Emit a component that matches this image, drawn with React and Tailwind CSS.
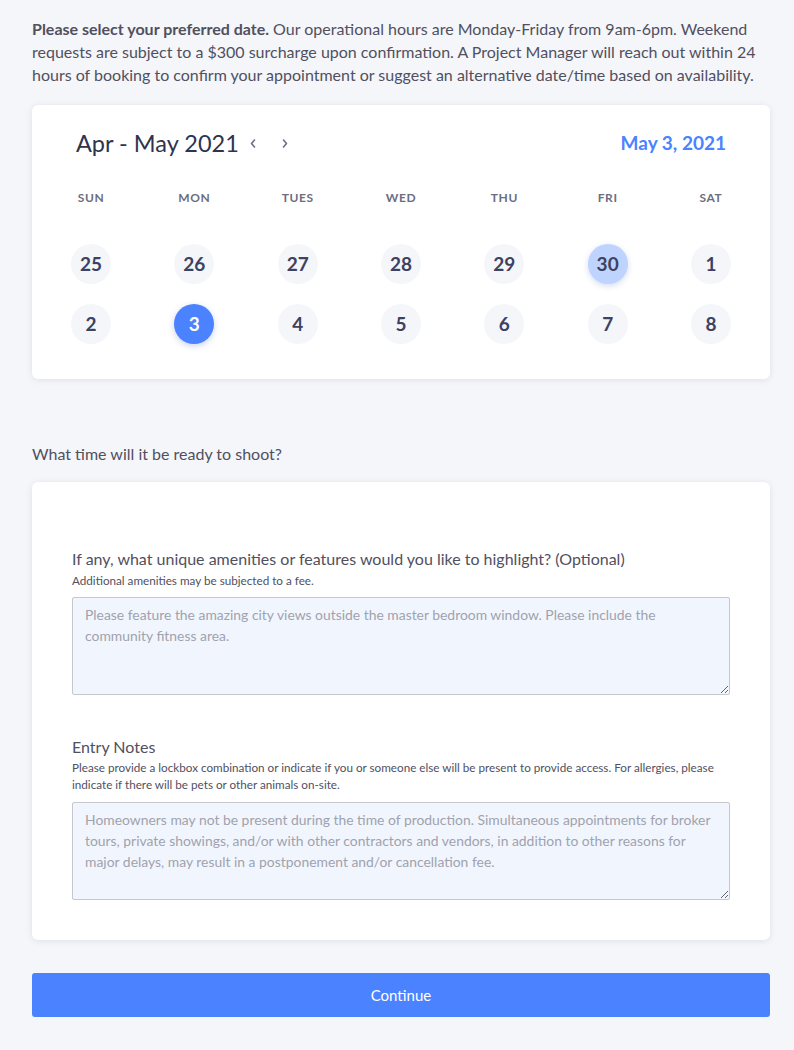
import React, { useState } from "react";

const weekdays = ["SUN", "MON", "TUES", "WED", "THU", "FRI", "SAT"];
const weeks = [
    [25, 26, 27, 28, 29, 30, 1],
    [2, 3, 4, 5, 6, 7, 8],
];

function Chevron({ dir }) {
    return (
        <svg width="6" height="9" viewBox="0 0 6 9" fill="none">
            <path
                d={dir === "left" ? "M4.5 1 L1.5 4.5 L4.5 8" : "M1.5 1 L4.5 4.5 L1.5 8"}
                stroke="#6b6e80"
                strokeWidth="1.6"
                strokeLinecap="round"
                strokeLinejoin="round"
            />
        </svg>
    );
}

function DayCircle({ day, week, selected }) {
    let cls = "bg-[#f5f6fa] text-[#3d4260]";
    if (selected === `${week}-${day}`) {
        cls = "bg-[#4a82ff] text-white shadow-[0_2px_6px_rgba(40,80,180,0.25)]";
    } else if (week === 0 && day === 30) {
        cls = "bg-[#bfd3ff] text-[#3d4260] shadow-[0_2px_6px_rgba(40,80,180,0.2)]";
    }
    return (
        <div className={`w-10 h-10 rounded-full flex items-center justify-center text-[19px] font-bold ${cls}`}>
            {day}
        </div>
    );
}

export default function App() {
    const [selected] = useState("1-3");

    return (
        <div className="min-h-[1050px] bg-[#f5f6fa] pl-8 pr-6 pt-[17px] pb-8 text-[#50505f]" style={{ fontFamily: "Lato, 'Open Sans', sans-serif" }}>
            <p className="text-[16px] leading-[23px]">
                <span className="font-bold">Please select your preferred date.</span> Our operational hours are Monday-Friday from 9am-6pm. Weekend requests are subject to a $300 surcharge upon confirmation. A Project Manager will reach out within 24 hours of booking to confirm your appointment or suggest an alternative date/time based on availability.
            </p>

            <div className="mt-[19px] bg-white rounded-md shadow-[0_1px_6px_rgba(60,70,110,0.12)] pt-[23px] pb-[35px]">
                <div className="flex items-center justify-between px-11">
                    <div className="flex items-center">
                        <span className="text-[23.5px] text-[#2e3350] leading-[30px]">Apr - May 2021</span>
                        <button className="ml-[11px] mt-[1px]"><Chevron dir="left" /></button>
                        <button className="ml-[26px] mt-[1px]"><Chevron dir="right" /></button>
                    </div>
                    <span className="text-[19px] font-bold text-[#4a82ff]">May 3, 2021</span>
                </div>

                <div className="flex justify-between px-[39px] mt-[31px]">
                    {weekdays.map(w => (
                        <div key={w} className="w-10 flex justify-center text-[12px] font-bold tracking-[0.05em] text-[#6b6e80]">
                            {w}
                        </div>
                    ))}
                </div>

                <div className="flex flex-col gap-5 mt-[37px] px-[39px]">
                    {weeks.map((row, i) => (
                        <div key={i} className="flex justify-between">
                            {row.map(d => (
                                <DayCircle key={d} day={d} week={i} selected={selected} />
                            ))}
                        </div>
                    ))}
                </div>
            </div>

            <p className="mt-[65px] text-[16px] leading-5">What time will it be ready to shoot?</p>

            <div className="mt-[18px] bg-white rounded-md shadow-[0_1px_6px_rgba(60,70,110,0.12)] px-10 pt-[67px] pb-10">
                <label className="block text-[16px] leading-5">If any, what unique amenities or features would you like to highlight? (Optional)</label>
                <p className="text-[11.7px] leading-[16px] mt-[3px]">Additional amenities may be subjected to a fee.</p>
                <textarea
                    className="mt-[9px] block w-full h-[98px] bg-[#f1f6fe] border border-[#c6c7cf] rounded-[2px] px-3 py-[6px] text-[13.9px] leading-[21px] placeholder:text-[#a0a2ad] outline-none"
                    placeholder="Please feature the amazing city views outside the master bedroom window. Please include the community fitness area."
                />

                <label className="block text-[16px] leading-5 mt-[42px]">Entry Notes</label>
                <p className="text-[11.7px] leading-[17px] mt-[2px]">
                    Please provide a lockbox combination or indicate if you or someone else will be present to provide access. For allergies, please indicate if there will be pets or other animals on-site.
                </p>
                <textarea
                    className="mt-[9px] block w-full h-[98px] bg-[#f1f6fe] border border-[#c6c7cf] rounded-[2px] px-3 py-[6px] text-[13.9px] leading-[21px] placeholder:text-[#a0a2ad] outline-none"
                    placeholder="Homeowners may not be present during the time of production. Simultaneous appointments for broker tours, private showings, and/or with other contractors and vendors, in addition to other reasons for major delays, may result in a postponement and/or cancellation fee."
                />
            </div>

            <button className="mt-[33px] w-full h-11 bg-[#4a82ff] rounded-[3px] text-white text-[15px]">
                Continue
            </button>
        </div>
    );
}
